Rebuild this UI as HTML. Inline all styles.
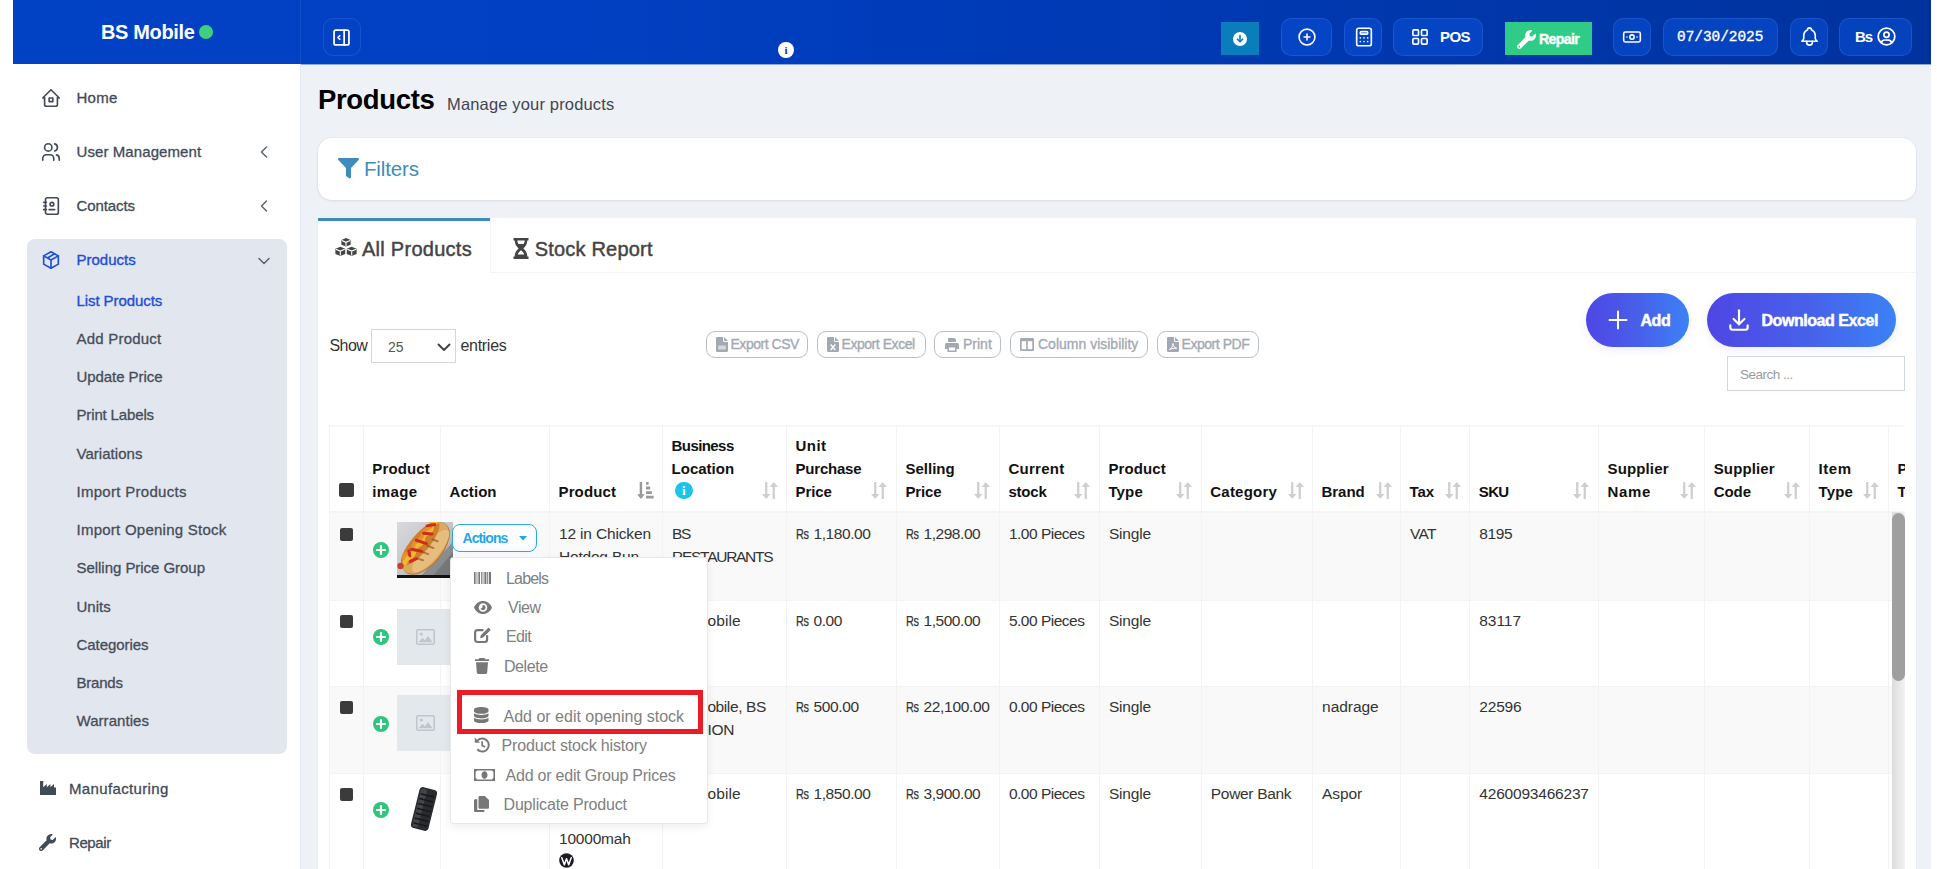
<!DOCTYPE html>
<html lang="en">
<head>
<meta charset="utf-8">
<title>Products - BS Mobile</title>
<style>
*{box-sizing:border-box}
html,body{margin:0;padding:0}
body{width:1937px;height:869px;overflow:hidden;position:relative;background:#fff;font-family:"Liberation Sans",sans-serif;color:#333}
.abs{position:absolute}
svg{display:block}
#app{position:absolute;left:13px;top:0;width:1918px;height:869px;background:#eef1f6}
/* ---------- header ---------- */
#hdr{position:absolute;left:13px;top:0;width:1918px;height:64px;background:linear-gradient(90deg,#0141c4 0%,#0140c2 30%,#0039b3 60%,#00339e 100%)}
#hdr::after{content:"";position:absolute;left:0;top:64px;width:100%;height:1px;background:inherit;opacity:.4}
#hdr .sep{position:absolute;left:287px;top:0;width:1px;height:64px;background:rgba(255,255,255,.07)}
.brand{position:absolute;left:101px;top:19.700px;font-size:20px;font-weight:700;color:#fff;line-height:24px;white-space:nowrap;letter-spacing:-.35px}
.dot{position:absolute;left:199px;top:25px;width:14px;height:14px;border-radius:50%;background:#3fcf80}
.hb{position:absolute;top:17.500px;height:38px;border-radius:10px;background:rgba(10,80,215,.55);border:1px solid rgba(120,160,255,.18);color:#fff}
.hb svg{position:absolute}
/* ---------- sidebar ---------- */
#side{position:absolute;left:13px;top:64px;width:288px;height:805px;background:#fff;border-right:1px solid #e6e9ef}
.mi{position:absolute;left:76.500px;font-size:15px;line-height:20px;color:#414a57;white-space:nowrap;-webkit-text-stroke:.3px #414a57}
.mi.sub{color:#454d59;-webkit-text-stroke:.3px #454d59}
.mi.act{color:#1d4ed8;-webkit-text-stroke:.35px #1d4ed8}
.ico{position:absolute}
#pbox{position:absolute;left:27px;top:239px;width:260px;height:515px;border-radius:8px;background:#e2e6ee}

/* ---------- main ---------- */
h1.title{position:absolute;left:318px;top:83.300px;margin:0;font-size:27.500px;line-height:34px;font-weight:700;color:#000;white-space:nowrap;letter-spacing:-.35px}
.subt{position:absolute;left:447px;top:93px;font-size:16.500px;line-height:22px;color:#3f4650;white-space:nowrap;letter-spacing:.16px}
.card{position:absolute;background:#fff}
#fcard{left:318px;top:138px;width:1598px;height:62px;border-radius:14px;box-shadow:0 1px 3px rgba(30,50,90,.08),0 0 0 1px rgba(30,50,90,.03)}
#tcard{left:318px;top:218px;width:1598px;height:660px;border-radius:3px 3px 0 0;box-shadow:0 1px 2px rgba(30,50,90,.06)}
.tab{position:absolute;top:0;height:55px;font-size:20px;line-height:28px;color:#444;white-space:nowrap;-webkit-text-stroke:.45px #444}
.ebtn{position:absolute;top:331px;height:27px;border:1.500px solid #b9bec7;border-radius:9px;color:#a3a9b3;font-size:14px;line-height:24px;white-space:nowrap;-webkit-text-stroke:.35px #a3a9b3;background:#fff}
.ebtn svg{position:absolute;top:5px}
.ebtn span{position:absolute;top:0}
.pill{position:absolute;top:293px;height:54px;border-radius:27px;background:linear-gradient(90deg,#4f46e5 0%,#4762ea 55%,#3b82f6 100%);color:#fff;font-weight:700;font-size:16px;box-shadow:0 3px 8px rgba(70,90,230,.10)}
.pill span{position:absolute;top:18.300px;line-height:20px;white-space:nowrap;-webkit-text-stroke:.5px #fff;letter-spacing:-.45px}

/* ---------- table ---------- */
#tbl{position:absolute;left:329px;top:425px;width:1576px;height:444px;overflow:hidden;background:#fff}
#tbl .abs{position:absolute}
.hl{position:absolute;left:0;width:1700px;height:1px;background:#f4f4f4}
.vl{position:absolute;top:0;width:1px;height:500px;background:#f3f3f3}
.th{position:absolute;font-size:15px;line-height:22.700px;font-weight:700;color:#111;white-space:nowrap}
.td{position:absolute;font-size:15.500px;line-height:23px;color:#333;white-space:nowrap}
.rs{display:inline-block;width:13.200px;transform:scaleX(.7);transform-origin:0 50%;letter-spacing:-.6px;-webkit-text-stroke:.25px #333}
.info{display:inline-block;width:17.500px;height:17.500px;border-radius:50%;background:#1fc3ea;color:#fff;font:bold 13px/17.500px "Liberation Serif",serif;text-align:center;margin-left:3.500px;position:relative;top:-4px;vertical-align:-2px;letter-spacing:0}
.srt{position:absolute;fill:#cfcfcf}
.srt.amt{fill:#999}
.cb{position:absolute;width:13px;height:13px;border-radius:2px;background:#3b3b3b}
.actb{position:absolute;width:85px;height:27.500px;border:1.500px solid #2aa9ea;border-radius:8px;background:#fff;box-shadow:inset 0 -3px 6px rgba(42,169,234,.06)}
.actb span{position:absolute;left:9.500px;top:3.500px;font-size:14px;line-height:18px;font-weight:700;color:#1ea7ec;letter-spacing:-.92px}
/* ---------- dropdown ---------- */
#dd{position:absolute;left:450px;top:557px;width:257.500px;height:266.500px;background:#fff;border:1px solid rgba(0,0,0,.09);border-radius:4px;box-shadow:0 3px 8px rgba(0,0,0,.07)}
#dd .it{position:absolute;font-size:16px;line-height:22px;color:#808080;white-space:nowrap}
#dd svg{position:absolute;fill:#777}
#hl{position:absolute;left:457px;top:690px;width:246px;height:43.500px;border:5px solid #eb1c25}
</style>
</head>
<body>
<div id="app"></div>

<!-- ================= HEADER ================= -->
<div id="hdr"><div class="sep"></div></div>
<div class="brand">BS Mobile</div><div class="dot"></div>

<div class="hb" style="left:323px;width:38px;background:rgba(10,70,200,.25)">
  <svg style="left:7px;top:8px" width="21" height="21" viewBox="0 0 24 24" fill="none" stroke="#fff" stroke-width="2" stroke-linecap="round" stroke-linejoin="round"><rect x="3.5" y="3.5" width="17" height="17" rx="2"/><path d="M15 3.5v17"/><path d="M10 10l-2 2 2 2"/></svg>
</div>
<div class="abs" style="left:778px;top:41.500px;width:16px;height:16.500px;border-radius:50%;background:#fff;color:#1a2a9a;font:bold 11px/17px 'Liberation Serif',serif;text-align:center">i</div>

<div class="abs" style="left:1221px;top:21.500px;width:38px;height:33px;background:#0a7dbd">
  <svg style="position:absolute;left:12px;top:10px" width="14" height="14" viewBox="0 0 14 14"><circle cx="7" cy="7" r="7" fill="#fff"/><path d="M7 3.6v6M4.4 7.2L7 9.8l2.6-2.6" fill="none" stroke="#0a7dbd" stroke-width="1.6" stroke-linecap="round" stroke-linejoin="round"/></svg>
</div>
<div class="hb" style="left:1281px;width:51px">
  <svg style="left:15px;top:8px" width="20" height="20" viewBox="0 0 24 24" fill="none" stroke="#fff" stroke-width="1.9" stroke-linecap="round"><circle cx="12" cy="12" r="9.5"/><path d="M12 8.5v7M8.5 12h7"/></svg>
</div>
<div class="hb" style="left:1344px;width:38px">
  <svg style="left:8px;top:7px" width="22" height="22" viewBox="0 0 24 24" fill="none" stroke="#fff" stroke-width="1.800" stroke-linecap="round" stroke-linejoin="round"><rect x="4" y="2.5" width="16" height="19" rx="2.2"/><rect x="8" y="6.2" width="8" height="2.6" rx=".8"/><path d="M8 13v.01M12 13v.01M16 13v.01M8 17v.01M12 17v.01M16 17v.01"/></svg>
</div>
<div class="hb" style="left:1393px;width:90px">
  <svg style="left:16.500px;top:9px" width="18" height="18" viewBox="0 0 24 24" fill="none" stroke="#fff" stroke-width="2.2" stroke-linejoin="round"><rect x="2.5" y="2.5" width="7.5" height="7.5" rx="1.4"/><rect x="14" y="2.5" width="7.5" height="7.5" rx="1.4"/><rect x="2.5" y="14" width="7.5" height="7.5" rx="1.4"/><rect x="14" y="14" width="7.5" height="7.5" rx="1.4"/></svg>
  <span class="abs" style="left:46px;top:8px;font-size:15px;line-height:20px;font-weight:700;letter-spacing:-.6px">POS</span>
</div>
<div class="abs" style="left:1505px;top:21.500px;width:87px;height:33px;background:#2ecc87;color:#fff">
  <svg style="position:absolute;left:12px;top:8px" width="19" height="19" viewBox="0 0 512 512"><path fill="#fff" d="M507.7 109.1c-2.2-9-13.5-12.100-20.100-5.500l-74.400 74.400-67.900-11.300-11.300-67.900 74.400-74.400c6.600-6.600 3.400-17.900-5.700-20.200C355.300-7.700 302.300 5 265.200 42.100c-39.700 39.700-50.600 97.200-34.100 147.400L18.700 402.800c-25 25-25 65.500 0 90.500s65.500 25 90.500 0l213.200-213.200c50.200 16.700 107.500 5.700 147.400-34.200 37.200-37.200 49.800-90.200 37.900-136.800zM64 472c-13.200 0-24-10.800-24-24 0-13.300 10.700-24 24-24s24 10.700 24 24c0 13.200-10.700 24-24 24z"/></svg>
  <span class="abs" style="left:34px;top:8px;font-size:14px;line-height:18px;font-weight:700;letter-spacing:-.55px;-webkit-text-stroke:.4px #fff">Repair</span>
</div>
<div class="hb" style="left:1613px;width:38px">
  <svg style="left:8px;top:8px" width="20" height="20" viewBox="0 0 24 24" fill="none" stroke="#fff" stroke-width="1.900" stroke-linecap="round" stroke-linejoin="round"><rect x="2" y="6" width="20" height="12" rx="2"/><circle cx="12" cy="12" r="2.6"/><path d="M6 12v.01M18 12v.01"/></svg>
</div>
<div class="hb" style="left:1663px;width:115px">
  <span class="abs" style="left:13px;top:9px;font-family:'Liberation Mono',monospace;font-size:14.4px;line-height:18px;letter-spacing:0;-webkit-text-stroke:.35px #fff">07/30/2025</span>
</div>
<div class="hb" style="left:1790px;width:38px">
  <svg style="left:7px;top:6px" width="23" height="23" viewBox="0 0 24 24" fill="none" stroke="#fff" stroke-width="1.700" stroke-linecap="round" stroke-linejoin="round"><path d="M10 5a2 2 0 114 0a7 7 0 014 6v3a4 4 0 002 3H4a4 4 0 002-3v-3a7 7 0 014-6"/><path d="M9 17v1a3 3 0 006 0v-1"/></svg>
</div>
<div class="hb" style="left:1839px;width:73px">
  <span class="abs" style="left:15px;top:8px;font-size:15px;line-height:20px;font-weight:700;letter-spacing:-1.200px">Bs</span>
  <svg style="left:36px;top:7px" width="21" height="21" viewBox="0 0 24 24" fill="none" stroke="#fff" stroke-width="2" stroke-linecap="round" stroke-linejoin="round"><circle cx="12" cy="12" r="9.5"/><circle cx="12" cy="10" r="3"/><path d="M6.2 18.9A4 4 0 0110 16h4a4 4 0 013.8 2.9"/></svg>
</div>

<!-- ================= SIDEBAR ================= -->
<div id="side"></div>
<div id="pbox"></div>

<svg class="ico" style="left:40px;top:87px" width="22" height="22" viewBox="0 0 24 24" fill="none" stroke="#414a57" stroke-width="1.8" stroke-linecap="round" stroke-linejoin="round"><path d="M5 12H3l9-9 9 9h-2"/><path d="M5 12v7a2 2 0 002 2h10a2 2 0 002-2v-7"/><rect x="10" y="12" width="4" height="4"/></svg>
<div class="mi" style="top:88px;letter-spacing:0.27px">Home</div>

<svg class="ico" style="left:40px;top:141px" width="22" height="22" viewBox="0 0 24 24" fill="none" stroke="#414a57" stroke-width="1.8" stroke-linecap="round" stroke-linejoin="round"><circle cx="9" cy="7" r="4"/><path d="M3 21v-2a4 4 0 014-4h4a4 4 0 014 4v2"/><path d="M16 3.13a4 4 0 010 7.75"/><path d="M21 21v-2a4 4 0 00-3-3.85"/></svg>
<div class="mi" style="top:142px;letter-spacing:0.09px">User Management</div>
<svg class="ico" style="left:260px;top:146px" width="8" height="12" viewBox="0 0 8 12" fill="none" stroke="#5b6370" stroke-width="1.5" stroke-linecap="round" stroke-linejoin="round"><path d="M6.5 1L1.5 6l5 5"/></svg>

<svg class="ico" style="left:40px;top:195px" width="22" height="22" viewBox="0 0 24 24" fill="none" stroke="#414a57" stroke-width="1.8" stroke-linecap="round" stroke-linejoin="round"><rect x="6" y="3" width="14" height="18" rx="2"/><circle cx="13" cy="10" r="2"/><path d="M10 16h6"/><path d="M4 8h3M4 12h3M4 16h3"/></svg>
<div class="mi" style="top:196px;letter-spacing:-0.1px">Contacts</div>
<svg class="ico" style="left:260px;top:200px" width="8" height="12" viewBox="0 0 8 12" fill="none" stroke="#5b6370" stroke-width="1.5" stroke-linecap="round" stroke-linejoin="round"><path d="M6.5 1L1.5 6l5 5"/></svg>

<svg class="ico" style="left:40px;top:249px" width="22" height="22" viewBox="0 0 24 24" fill="none" stroke="#1d4ed8" stroke-width="1.8" stroke-linecap="round" stroke-linejoin="round"><path d="M12 3l8 4.500v9L12 21l-8-4.500v-9L12 3"/><path d="M12 12l8-4.500M12 12v9M12 12L4 7.500M16 5.250l-8 4.500"/></svg>
<div class="mi act" style="top:250px;letter-spacing:0px">Products</div>
<svg class="ico" style="left:258px;top:257px" width="12" height="8" viewBox="0 0 12 8" fill="none" stroke="#5b6370" stroke-width="1.5" stroke-linecap="round" stroke-linejoin="round"><path d="M1 1.500l5 5 5-5"/></svg>

<div class="mi sub act" style="top:291px;letter-spacing:-0.08px">List Products</div>
<div class="mi sub" style="top:329px;letter-spacing:0.22px">Add Product</div>
<div class="mi sub" style="top:367px;letter-spacing:-0.06px">Update Price</div>
<div class="mi sub" style="top:405px;letter-spacing:-0.15px">Print Labels</div>
<div class="mi sub" style="top:444px;letter-spacing:0.04px">Variations</div>
<div class="mi sub" style="top:482px;letter-spacing:0.29px">Import Products</div>
<div class="mi sub" style="top:520px;letter-spacing:0.25px">Import Opening Stock</div>
<div class="mi sub" style="top:558px;letter-spacing:-0.04px">Selling Price Group</div>
<div class="mi sub" style="top:597px;letter-spacing:0px">Units</div>
<div class="mi sub" style="top:635px;letter-spacing:-0.06px">Categories</div>
<div class="mi sub" style="top:673px;letter-spacing:-0.21px">Brands</div>
<div class="mi sub" style="top:711px;letter-spacing:0.06px">Warranties</div>

<svg class="ico" style="left:40px;top:781px" width="16" height="14" viewBox="0 0 16 14"><path fill="#414a57" d="M0 0h3.200v6.200L6.800 3v3.200L10.400 3v3.200L14 3v3.500h2V14H0z"/></svg>
<div class="mi" style="left:69px;top:779px;letter-spacing:0.35px">Manufacturing</div>
<svg class="ico" style="left:39px;top:834px" width="17" height="17" viewBox="0 0 512 512"><path fill="#414a57" d="M507.700 109.100c-2.200-9-13.500-12.100-20.100-5.500l-74.400 74.400-67.900-11.300-11.300-67.900 74.400-74.400c6.600-6.600 3.400-17.900-5.700-20.200C355.300-7.700 302.300 5 265.200 42.100c-39.700 39.700-50.600 97.200-34.100 147.400L18.700 402.800c-25 25-25 65.500 0 90.500s65.500 25 90.500 0l213.200-213.200c50.200 16.700 107.500 5.700 147.400-34.200 37.200-37.200 49.800-90.200 37.900-136.800zM64 472c-13.200 0-24-10.800-24-24 0-13.300 10.700-24 24-24s24 10.700 24 24c0 13.200-10.700 24-24 24z"/></svg>
<div class="mi" style="left:69px;top:833px;letter-spacing:-0.41px">Repair</div>


<!-- ================= MAIN ================= -->
<h1 class="title">Products</h1>
<div class="subt">Manage your products</div>

<div class="card" id="fcard">
  <svg class="abs" style="left:20px;top:20px" width="21" height="21" viewBox="0 0 21 21"><path fill="#3c8dbc" d="M1.200 0h18.600c1 0 1.550 1.200.85 1.950L13 10v9.300c0 .95-1.050 1.500-1.850.95l-2.500-1.800A1.200 1.200 0 018 17.300V10L.350 1.950C-.350 1.200.200 0 1.200 0z"/></svg>
  <div class="abs" style="left:46px;top:18px;font-size:20.500px;line-height:26px;color:#3c8dbc;white-space:nowrap;letter-spacing:-.15px">Filters</div>
</div>

<div class="card" id="tcard">
  <div class="abs" style="left:172px;top:54px;width:1426px;height:1px;background:#f4f4f4"></div>
  <div class="abs" style="left:0;top:0;width:172px;height:3px;background:#3c8dbc"></div>
  <div class="abs" style="left:172px;top:0;width:1px;height:55px;background:#f4f4f4"></div>
  <div class="tab" style="left:0;width:172px">
    <svg class="abs" style="left:17px;top:20px" width="22" height="20" viewBox="0 0 22 20"><g fill="#444"><path d="M11 0l4.600 1.900v4.800L11 8.600 6.400 6.700V1.900z"/><path d="M5.300 8.700l4.900 2v5.200l-4.900 2.100-4.900-2.100v-5.200z"/><path d="M16.700 8.700l4.900 2v5.200l-4.900 2.100-4.900-2.100v-5.200z"/></g><g fill="none" stroke="#fff" stroke-width="1.100"><path d="M6.900 2.600L11 4.300l4.100-1.700M11 4.300v3.800"/><path d="M.9 11.300l4.400 1.800 4.400-1.800M5.300 13.100v4.400"/><path d="M12.300 11.300l4.400 1.800 4.400-1.800M16.700 13.100v4.400"/></g></svg>
    <span class="abs" style="left:44px;top:17px;letter-spacing:.27px">All Products</span>
  </div>
  <div class="tab" style="left:173px;width:190px">
    <svg class="abs" style="left:22px;top:20px" width="16" height="21" viewBox="0 0 16 21"><path fill="#444" d="M.500 0h15v2.600h-1.200c0 3.300-1.600 5.900-3.900 7.900 2.300 2 3.900 4.600 3.900 7.900h1.200V21H.500v-2.600h1.200c0-3.300 1.600-5.900 3.900-7.900C3.300 8.500 1.700 5.900 1.700 2.600H.500z"/><path fill="#fff" d="M4.300 2.600h7.400c0 1.300-.5 2.500-1.200 3.500H5.500c-.7-1-1.200-2.200-1.200-3.500zM8 12.300c1.500 1.200 2.700 2.600 3.300 4.300H4.700c.6-1.700 1.800-3.100 3.300-4.300z"/></svg>
    <span class="abs" style="left:43.700px;top:17px;letter-spacing:.2px">Stock Report</span>
  </div>
</div>

<div class="abs" style="left:329.500px;top:334.500px;font-size:16px;line-height:22px;color:#333;letter-spacing:-.55px">Show</div>
<div class="abs" style="left:371px;top:329px;width:85px;height:34px;border:1px solid #d2d6de;background:#fff">
  <span class="abs" style="left:16px;top:8px;font-size:14px;line-height:18px;color:#555">25</span>
  <svg class="abs" style="left:65px;top:13px" width="14" height="9" viewBox="0 0 14 9" fill="none" stroke="#444" stroke-width="2" stroke-linecap="round" stroke-linejoin="round"><path d="M1.500 1.500L7 7l5.500-5.500"/></svg>
</div>
<div class="abs" style="left:460.500px;top:334.500px;font-size:16px;line-height:22px;color:#333;letter-spacing:-.3px">entries</div>

<div class="ebtn" style="left:706px;width:102px">
  <svg style="left:9px" width="12" height="15" viewBox="0 0 12 15"><path fill="#a3a9b3" d="M0 1.200C0 .500.500 0 1.200 0H7v3.800c0 .700.500 1.200 1.200 1.200H12v8.800c0 .700-.500 1.200-1.200 1.200H1.200C.500 15 0 14.500 0 13.800zM8 0l4 4H8.400A.400.400 0 018 3.600z"/><path fill="#fff" d="M2.200 8.500h7.600v4H2.200z" opacity=".55"/></svg>
  <span style="left:23.500px;letter-spacing:-.47px">Export CSV</span>
</div>
<div class="ebtn" style="left:817px;width:109px">
  <svg style="left:9px" width="12" height="15" viewBox="0 0 12 15"><path fill="#a3a9b3" d="M0 1.200C0 .500.500 0 1.200 0H7v3.800c0 .700.500 1.200 1.200 1.200H12v8.800c0 .700-.500 1.200-1.200 1.200H1.200C.500 15 0 14.500 0 13.800zM8 0l4 4H8.400A.400.400 0 018 3.600z"/><path d="M3.700 7.500l4.600 5.500M8.300 7.500L3.700 13" stroke="#fff" stroke-width="1.300" fill="none"/></svg>
  <span style="left:23.500px;letter-spacing:-.45px">Export Excel</span>
</div>
<div class="ebtn" style="left:934px;width:67px">
  <svg style="left:10px;top:6px" width="14" height="14" viewBox="0 0 14 14"><path fill="#a3a9b3" d="M3 0h6.500L11 1.500V4H3zM1.500 5h11c.800 0 1.500.700 1.500 1.500V11h-2.500v3h-9v-3H0V6.500C0 5.700.700 5 1.500 5z"/><path fill="#fff" d="M4 9.500h6v3H4z"/></svg>
  <span style="left:28px">Print</span>
</div>
<div class="ebtn" style="left:1010px;width:138px">
  <svg style="left:9px;top:6px" width="14" height="13" viewBox="0 0 14 13"><path fill="#a3a9b3" d="M1.300 0h11.400c.700 0 1.300.600 1.300 1.300v10.400c0 .700-.600 1.300-1.300 1.300H1.300C.600 13 0 12.400 0 11.700V1.300C0 .600.600 0 1.300 0z"/><path fill="#fff" d="M1.700 3.300h4.500v8H1.700zM7.800 3.300h4.500v8H7.800z"/></svg>
  <span style="left:27px">Column visibility</span>
</div>
<div class="ebtn" style="left:1157px;width:102px">
  <svg style="left:9px" width="12" height="15" viewBox="0 0 12 15"><path fill="#a3a9b3" d="M0 1.200C0 .500.500 0 1.200 0H7v3.800c0 .700.500 1.200 1.200 1.200H12v8.800c0 .700-.500 1.200-1.200 1.200H1.200C.500 15 0 14.500 0 13.800zM8 0l4 4H8.400A.400.400 0 018 3.600z"/><path d="M2.500 12.500c2-1 3.500-3.500 3.500-6 0 2.500 1.500 4.500 3.800 4.800-2.500-.200-5 .300-7.300 1.200z" stroke="#fff" stroke-width="1" fill="none"/></svg>
  <span style="left:23.500px;letter-spacing:-.45px">Export PDF</span>
</div>

<div class="pill" style="left:1586px;width:103px">
  <svg class="abs" style="left:21.500px;top:17.300px" width="20" height="20" viewBox="0 0 20 20" fill="none" stroke="#fff" stroke-width="2" stroke-linecap="round"><path d="M10 1.500v17M1.500 10h17"/></svg>
  <span style="left:54.500px">Add</span>
</div>
<div class="pill" style="left:1707px;width:189px">
  <svg class="abs" style="left:18.500px;top:14.200px" width="26" height="26" viewBox="0 0 24 24" fill="none" stroke="#fff" stroke-width="2" stroke-linecap="round" stroke-linejoin="round"><path d="M4 17v2a2 2 0 002 2h12a2 2 0 002-2v-2"/><path d="M7 11l5 5 5-5"/><path d="M12 3v13"/></svg>
  <span style="left:54.500px">Download Excel</span>
</div>
<div class="abs" style="left:1727px;top:356px;width:178px;height:35px;border:1px solid #d2d6de;background:#fff">
  <span class="abs" style="left:12px;top:9px;font-size:13.500px;line-height:18px;color:#9a9a9a;letter-spacing:-.5px">Search ...</span>
</div>

<!-- ================= TABLE ================= -->
<!--TBL_START-->
<div id="tbl">
<div class="abs" style="left:0;top:88px;width:1700px;height:87px;background:#f9f9f9"></div>
<div class="abs" style="left:0;top:260.5px;width:1700px;height:87.5px;background:#f9f9f9"></div>
<div class="hl" style="top:0;height:2px;background:#f8f8f8"></div>
<div class="hl" style="top:86px;height:2px"></div>
<div class="hl" style="top:175px"></div>
<div class="hl" style="top:260.5px"></div>
<div class="hl" style="top:348px"></div>
<div class="vl" style="left:0px"></div>
<div class="vl" style="left:34px"></div>
<div class="vl" style="left:111px"></div>
<div class="vl" style="left:220px"></div>
<div class="vl" style="left:333px"></div>
<div class="vl" style="left:457px"></div>
<div class="vl" style="left:567px"></div>
<div class="vl" style="left:670px"></div>
<div class="vl" style="left:770px"></div>
<div class="vl" style="left:872px"></div>
<div class="vl" style="left:983px"></div>
<div class="vl" style="left:1071px"></div>
<div class="vl" style="left:1140px"></div>
<div class="vl" style="left:1269px"></div>
<div class="vl" style="left:1375px"></div>
<div class="vl" style="left:1480px"></div>
<div class="vl" style="left:1559px"></div>
<div class="th" style="left:43.3px;top:32.95px"><span style="letter-spacing:0.13px">Product</span><br><span style="letter-spacing:0.37px">image</span></div>
<div class="th" style="left:120.6px;top:55.65px"><span style="letter-spacing:0.05px">Action</span></div>
<div class="th" style="left:229.5px;top:55.65px"><span style="letter-spacing:0.13px">Product</span></div>
<svg class="srt amt" style="left:308.2px;top:57.3px" width="17" height="17" viewBox="0 0 17 17"><path d="M2.700 0h2.400v12.300h2.600L3.900 17 .100 12.300h2.600zM9 0h2.600v2.800H9zM9 4.600h4.200v2.800H9zM9 9.200h5.900V12H9zM9 13.800h7.600v2.800H9z"/></svg>
<div class="th" style="left:342.6px;top:10.25px"><span style="letter-spacing:-0.58px">Business</span><br><span style="letter-spacing:0px">Location</span><br><span class="info">i</span></div>
<svg class="srt" style="left:432.5px;top:57.3px" width="16" height="17" viewBox="0 0 16 17"><path d="M3.100 0h2.300v12h3L4.250 17 0 12h3.100zM10.600 17h2.300V5h3.100L11.750 0 7.500 5h3.100z"/></svg>
<div class="th" style="left:466.6px;top:10.25px"><span style="letter-spacing:0.43px">Unit</span><br><span style="letter-spacing:-0.23px">Purchase</span><br><span style="letter-spacing:-0.14px">Price</span></div>
<svg class="srt" style="left:542.4px;top:57.3px" width="16" height="17" viewBox="0 0 16 17"><path d="M3.100 0h2.300v12h3L4.250 17 0 12h3.100zM10.600 17h2.300V5h3.100L11.750 0 7.500 5h3.100z"/></svg>
<div class="th" style="left:576.5px;top:32.95px"><span style="letter-spacing:0px">Selling</span><br><span style="letter-spacing:-0.14px">Price</span></div>
<svg class="srt" style="left:645.3px;top:57.3px" width="16" height="17" viewBox="0 0 16 17"><path d="M3.100 0h2.300v12h3L4.250 17 0 12h3.100zM10.600 17h2.300V5h3.100L11.750 0 7.500 5h3.100z"/></svg>
<div class="th" style="left:679.4px;top:32.95px"><span style="letter-spacing:0.29px">Current</span><br><span style="letter-spacing:-0.18px">stock</span></div>
<svg class="srt" style="left:745.3px;top:57.3px" width="16" height="17" viewBox="0 0 16 17"><path d="M3.100 0h2.300v12h3L4.250 17 0 12h3.100zM10.600 17h2.300V5h3.100L11.750 0 7.500 5h3.100z"/></svg>
<div class="th" style="left:779.4px;top:32.95px"><span style="letter-spacing:0.13px">Product</span><br><span style="letter-spacing:0.15px">Type</span></div>
<svg class="srt" style="left:847.2px;top:57.3px" width="16" height="17" viewBox="0 0 16 17"><path d="M3.100 0h2.300v12h3L4.250 17 0 12h3.100zM10.600 17h2.300V5h3.100L11.750 0 7.500 5h3.100z"/></svg>
<div class="th" style="left:881.3px;top:55.65px"><span style="letter-spacing:0.21px">Category</span></div>
<svg class="srt" style="left:958.5px;top:57.3px" width="16" height="17" viewBox="0 0 16 17"><path d="M3.100 0h2.300v12h3L4.250 17 0 12h3.100zM10.600 17h2.300V5h3.100L11.750 0 7.500 5h3.100z"/></svg>
<div class="th" style="left:992.6px;top:55.65px"><span style="letter-spacing:-0.07px">Brand</span></div>
<svg class="srt" style="left:1046.5px;top:57.3px" width="16" height="17" viewBox="0 0 16 17"><path d="M3.100 0h2.300v12h3L4.250 17 0 12h3.100zM10.600 17h2.300V5h3.100L11.750 0 7.500 5h3.100z"/></svg>
<div class="th" style="left:1080.6px;top:55.65px"><span style="letter-spacing:-0.11px">Tax</span></div>
<svg class="srt" style="left:1115.7px;top:57.3px" width="16" height="17" viewBox="0 0 16 17"><path d="M3.100 0h2.300v12h3L4.250 17 0 12h3.100zM10.600 17h2.300V5h3.100L11.750 0 7.500 5h3.100z"/></svg>
<div class="th" style="left:1149.8px;top:55.65px"><span style="letter-spacing:-0.66px">SKU</span></div>
<svg class="srt" style="left:1244.4px;top:57.3px" width="16" height="17" viewBox="0 0 16 17"><path d="M3.100 0h2.300v12h3L4.250 17 0 12h3.100zM10.600 17h2.300V5h3.100L11.750 0 7.500 5h3.100z"/></svg>
<div class="th" style="left:1278.5px;top:32.95px"><span style="letter-spacing:0.14px">Supplier</span><br><span style="letter-spacing:0.64px">Name</span></div>
<svg class="srt" style="left:1350.6px;top:57.3px" width="16" height="17" viewBox="0 0 16 17"><path d="M3.100 0h2.300v12h3L4.250 17 0 12h3.100zM10.600 17h2.300V5h3.100L11.750 0 7.500 5h3.100z"/></svg>
<div class="th" style="left:1384.7px;top:32.95px"><span style="letter-spacing:0.14px">Supplier</span><br><span style="letter-spacing:-0.07px">Code</span></div>
<svg class="srt" style="left:1455.4px;top:57.3px" width="16" height="17" viewBox="0 0 16 17"><path d="M3.100 0h2.300v12h3L4.250 17 0 12h3.100zM10.600 17h2.300V5h3.100L11.750 0 7.500 5h3.100z"/></svg>
<div class="th" style="left:1489.5px;top:32.95px"><span style="letter-spacing:0.59px">Item</span><br><span style="letter-spacing:0.15px">Type</span></div>
<svg class="srt" style="left:1534.4px;top:57.3px" width="16" height="17" viewBox="0 0 16 17"><path d="M3.100 0h2.300v12h3L4.250 17 0 12h3.100zM10.600 17h2.300V5h3.100L11.750 0 7.500 5h3.100z"/></svg>
<div class="th" style="left:1568.5px;top:32.95px"><span style="letter-spacing:0.13px">Product</span><br><span style="letter-spacing:0px">Tags</span></div>
<div class="cb" style="left:10.2px;top:57.5px;width:14.500px;height:14.500px"></div>
<div class="cb" style="left:10.8px;top:103px"></div>
<svg class="abs" style="left:43.8px;top:116.5px" width="16" height="16" viewBox="0 0 16 16"><circle cx="8" cy="8" r="8" fill="#2fc57d"/><path d="M8 4v8M4 8h8" stroke="#fff" stroke-width="2.200" stroke-linecap="round"/></svg>
<svg class="abs" style="left:68.2px;top:96.8px" width="56" height="56" viewBox="0 0 56 56"><defs><linearGradient id="hg" x1="0" y1="0" x2="1" y2="1"><stop offset="0" stop-color="#d9dadd"/><stop offset=".5" stop-color="#c4c5c9"/><stop offset="1" stop-color="#9a9b9e"/></linearGradient><clipPath id="hc"><rect width="56" height="56"/></clipPath></defs><g clip-path="url(#hc)"><rect width="56" height="56" fill="url(#hg)"/><path d="M30 56L56 26v30z" fill="#77787b"/><path d="M22 56l34-36v10L34 56z" fill="#8b8c8f"/><g transform="rotate(-50 28.500 26) translate(-.500 -2)"><ellipse cx="29" cy="28.800" rx="31.500" ry="16.200" fill="#b47a33"/><ellipse cx="29" cy="28" rx="31" ry="15.800" fill="#dba960"/><ellipse cx="30" cy="34" rx="27" ry="8.500" fill="#e6bd7c"/><ellipse cx="29" cy="21" rx="28" ry="9" fill="#cf7f2c"/><path d="M4 22c6-5 9 4 15-1s9 4 15-1 9 4 15-1 5 1 6 0" stroke="#f2b634" stroke-width="5" fill="none" stroke-linecap="round"/><path d="M7 17.500c6-4 9 4 15 0s9 4 15 0 9 3 14 0" stroke="#e8912b" stroke-width="3.500" fill="none" stroke-linecap="round"/><path d="M9 25l6 3M19 18l5 9M29 16l4 10M39 17l5 7M47 15l6 5M13 21l3-4" stroke="#c9301b" stroke-width="3" fill="none" stroke-linecap="round"/><path d="M24 28l2 6M32 28l2 6M40 28l2 5M16 29l2 5" stroke="#8a4a1c" stroke-width="2" fill="none" stroke-linecap="round" opacity=".6"/></g><circle cx="3.500" cy="44" r="3.200" fill="#c9402a"/><rect y="53" width="53" height="3" fill="#121214"/></g></svg>
<div class="td" style="left:230px;top:97.32px"><span style="letter-spacing:-0.16px">12 in Chicken</span><br><span style="letter-spacing:-0.2px">Hotdog Bun</span></div>
<div class="td" style="left:343.1px;top:97.32px"><span style="letter-spacing:-1.5px">BS</span><br><span style="letter-spacing:-1.28px">RESTAURANTS</span></div>
<div class="td" style="left:467.1px;top:97.32px"><span class="rs">Rs</span> <span style="letter-spacing:-0.45px">1,180.00</span></div>
<div class="td" style="left:577px;top:97.32px"><span class="rs">Rs</span> <span style="letter-spacing:-0.45px">1,298.00</span></div>
<div class="td" style="left:679.9px;top:97.32px"><span style="letter-spacing:-0.49px">1.00 Pieces</span></div>
<div class="td" style="left:779.9px;top:97.32px"><span style="letter-spacing:-0.17px">Single</span></div>
<div class="td" style="left:1081.1px;top:97.32px"><span style="letter-spacing:-0.75px">VAT</span></div>
<div class="td" style="left:1150.3px;top:97.32px"><span style="letter-spacing:-0.37px">8195</span></div>
<div class="cb" style="left:10.8px;top:190px"></div>
<svg class="abs" style="left:43.8px;top:204px" width="16" height="16" viewBox="0 0 16 16"><circle cx="8" cy="8" r="8" fill="#2fc57d"/><path d="M8 4v8M4 8h8" stroke="#fff" stroke-width="2.200" stroke-linecap="round"/></svg>
<div class="abs" style="left:68.2px;top:184.3px;width:56px;height:56px;background:#e3e8ec"></div>
<svg class="abs" style="left:87.2px;top:204.3px" width="19" height="16" viewBox="0 0 19 16"><rect x=".750" y=".750" width="17.500" height="14.500" rx="1.200" fill="none" stroke="#bfc6cb" stroke-width="1.500"/><circle cx="5.300" cy="5" r="1.600" fill="#bfc6cb"/><path d="M2.500 13.200l4-4.500 2.500 2.600 3-4.300 4.500 6.200z" fill="#bfc6cb"/></svg>
<div class="td" style="left:230px;top:184.32px"><span style="letter-spacing:-0.2px">Test Product</span></div>
<div class="td" style="left:343.1px;top:184.32px"><span style="letter-spacing:-.65px">BS M</span><span style="letter-spacing:.15px">obile</span></div>
<div class="td" style="left:467.1px;top:184.32px"><span class="rs">Rs</span> <span style="letter-spacing:-0.49px">0.00</span></div>
<div class="td" style="left:577px;top:184.32px"><span class="rs">Rs</span> <span style="letter-spacing:-0.45px">1,500.00</span></div>
<div class="td" style="left:679.9px;top:184.32px"><span style="letter-spacing:-0.49px">5.00 Pieces</span></div>
<div class="td" style="left:779.9px;top:184.32px"><span style="letter-spacing:-0.17px">Single</span></div>
<div class="td" style="left:1150.3px;top:184.32px"><span style="letter-spacing:-0.05px">83117</span></div>
<div class="cb" style="left:10.8px;top:276px"></div>
<svg class="abs" style="left:43.8px;top:290.8px" width="16" height="16" viewBox="0 0 16 16"><circle cx="8" cy="8" r="8" fill="#2fc57d"/><path d="M8 4v8M4 8h8" stroke="#fff" stroke-width="2.200" stroke-linecap="round"/></svg>
<div class="abs" style="left:68.2px;top:270.4px;width:56px;height:56px;background:#e3e8ec"></div>
<svg class="abs" style="left:87.2px;top:290.4px" width="19" height="16" viewBox="0 0 19 16"><rect x=".750" y=".750" width="17.500" height="14.500" rx="1.200" fill="none" stroke="#bfc6cb" stroke-width="1.500"/><circle cx="5.300" cy="5" r="1.600" fill="#bfc6cb"/><path d="M2.500 13.200l4-4.500 2.500 2.600 3-4.300 4.500 6.200z" fill="#bfc6cb"/></svg>
<div class="td" style="left:230px;top:270.42px"><span style="letter-spacing:-0.2px">Nadrage</span></div>
<div class="td" style="left:343.1px;top:270.42px"><span style="letter-spacing:-.65px">BS M</span><span style="letter-spacing:-.4px">obile, BS</span><br><span style="letter-spacing:-1.25px">FASH</span><span style="letter-spacing:-.3px">ION</span></div>
<div class="td" style="left:467.1px;top:270.42px"><span class="rs">Rs</span> <span style="letter-spacing:-0.37px">500.00</span></div>
<div class="td" style="left:577px;top:270.42px"><span class="rs">Rs</span> <span style="letter-spacing:-0.32px">22,100.00</span></div>
<div class="td" style="left:679.9px;top:270.42px"><span style="letter-spacing:-0.49px">0.00 Pieces</span></div>
<div class="td" style="left:779.9px;top:270.42px"><span style="letter-spacing:-0.17px">Single</span></div>
<div class="td" style="left:993.1px;top:270.42px"><span style="letter-spacing:-0.04px">nadrage</span></div>
<div class="td" style="left:1150.3px;top:270.42px"><span style="letter-spacing:-0.2px">22596</span></div>
<div class="cb" style="left:10.8px;top:363px"></div>
<svg class="abs" style="left:43.8px;top:377px" width="16" height="16" viewBox="0 0 16 16"><circle cx="8" cy="8" r="8" fill="#2fc57d"/><path d="M8 4v8M4 8h8" stroke="#fff" stroke-width="2.200" stroke-linecap="round"/></svg>
<svg class="abs" style="left:78.2px;top:361.3px" width="34" height="46" viewBox="0 0 34 46"><g transform="rotate(14 17 23)"><rect x="8" y="2" width="18" height="42" rx="3.500" fill="#2a2b2f"/><rect x="9.500" y="3.500" width="6" height="39" rx="2" fill="#45464b"/><path d="M10 9h14M10 14h14M10 19h14M10 24h14M10 29h14M10 34h14M10 39h14" stroke="#18191c" stroke-width="1.600"/></g></svg>
<div class="td" style="left:230px;top:357.32px;line-height:22.600px"><span style="letter-spacing:-0.2px">Aspor A323</span><br><span style="letter-spacing:-0.31px">Power Bank</span><br><span style="letter-spacing:-0.2px">10000mah</span></div>
<div class="td" style="left:343.1px;top:357.32px"><span style="letter-spacing:-.65px">BS M</span><span style="letter-spacing:.15px">obile</span></div>
<div class="td" style="left:467.1px;top:357.32px"><span class="rs">Rs</span> <span style="letter-spacing:-0.45px">1,850.00</span></div>
<div class="td" style="left:577px;top:357.32px"><span class="rs">Rs</span> <span style="letter-spacing:-0.45px">3,900.00</span></div>
<div class="td" style="left:679.9px;top:357.32px"><span style="letter-spacing:-0.49px">0.00 Pieces</span></div>
<div class="td" style="left:779.9px;top:357.32px"><span style="letter-spacing:-0.17px">Single</span></div>
<div class="td" style="left:881.8px;top:357.32px"><span style="letter-spacing:-0.31px">Power Bank</span></div>
<div class="td" style="left:993.1px;top:357.32px"><span style="letter-spacing:-0.1px">Aspor</span></div>
<div class="td" style="left:1150.3px;top:357.32px"><span style="letter-spacing:-0.2px">4260093466237</span></div>
<svg class="abs" style="left:230px;top:428px" width="15" height="15" viewBox="0 0 15 15"><circle cx="7.500" cy="7.500" r="7.300" fill="#1c1c26"/><path d="M2.800 4.800l2.500 7 2.200-6 2.200 6 2.500-7" stroke="#fff" stroke-width="1.500" fill="none" stroke-linecap="round" stroke-linejoin="round"/></svg>
<div class="actb" style="left:123px;top:99.2px"><span>Actions</span><svg class="abs" style="left:65.500px;top:11px" width="8" height="4.500" viewBox="0 0 8 4.500"><path d="M0 0h8L4 4.500z" fill="#1ea7ec"/></svg></div>
<div class="actb" style="left:123px;top:185.6px"><span>Actions</span><svg class="abs" style="left:65.500px;top:11px" width="8" height="4.500" viewBox="0 0 8 4.500"><path d="M0 0h8L4 4.500z" fill="#1ea7ec"/></svg></div>
<div class="actb" style="left:123px;top:271.1px"><span>Actions</span><svg class="abs" style="left:65.500px;top:11px" width="8" height="4.500" viewBox="0 0 8 4.500"><path d="M0 0h8L4 4.500z" fill="#1ea7ec"/></svg></div>
<div class="actb" style="left:123px;top:358.6px"><span>Actions</span><svg class="abs" style="left:65.500px;top:11px" width="8" height="4.500" viewBox="0 0 8 4.500"><path d="M0 0h8L4 4.500z" fill="#1ea7ec"/></svg></div>
<div class="abs" style="left:1563px;top:87px;width:13px;height:400px;background:linear-gradient(90deg,#dcdcdc,#f3f3f3)"></div>
<div class="abs" style="left:1563px;top:88.2px;width:13px;height:167.500px;border-radius:6.500px;background:#9f9f9f"></div>
</div>
<!--TBL_END-->

<!-- ================= ACTIONS DROPDOWN ================= -->
<div id="dd">
  <svg style="left:22.500px;top:14px" width="17" height="12" viewBox="0 0 17 12"><path d="M0 0h1.600v12H0zM2.600 0h.800v12h-.800zM4.400 0h1.600v12H4.400zM7 0h.800v12H7zM8.600 0h.800v12h-.800zM10.400 0h2v12h-2zM13.200 0h.800v12h-.800zM14.800 0H17v12h-2.200z"/></svg>
  <div class="it" style="left:55px;top:9.500px;letter-spacing:-.81px">Labels</div>
  <svg style="left:23px;top:42.500px" width="18" height="13" viewBox="0 0 18 13"><path d="M9 0c4 0 7.300 2.500 9 6.500-1.700 4-5 6.500-9 6.500S1.700 10.500 0 6.500C1.700 2.500 5 0 9 0zm0 2.200a4.300 4.300 0 100 8.600 4.300 4.300 0 000-8.600zm0 1.700a2.600 2.600 0 11-2.500 3.300 1.400 1.400 0 001.800-1.800c.200-1 .400-1.500.700-1.500z"/></svg>
  <div class="it" style="left:57px;top:38.500px;letter-spacing:-.47px">View</div>
  <svg style="left:23px;top:69px" width="17" height="16" viewBox="0 0 17 16"><path d="M3.300 2h6.200v2.200H3.600c-.800 0-1.400.600-1.400 1.400v7c0 .800.600 1.400 1.400 1.400h7c.800 0 1.400-.600 1.400-1.400V8.300h2.200v4.600c0 1.700-1.400 3.100-3.100 3.100H3.300C1.500 16 0 14.600 0 12.800V5.200C0 3.400 1.500 2 3.300 2zM14.300.300l1.900 1.900c.400.400.400 1 0 1.400l-7 7-3.100.700.700-3.100 7-7c.400-.400 1-.400 1.400 0z" fill-rule="evenodd"/></svg>
  <div class="it" style="left:55px;top:67.800px;letter-spacing:-.64px">Edit</div>
  <svg style="left:23.500px;top:100px" width="14" height="16" viewBox="0 0 14 16"><path d="M4.500 0h5l.800 1.200H14v1.900H0V1.200h3.700zM1 4.300h12l-.800 10.300c-.100.800-.700 1.400-1.500 1.400H3.300c-.800 0-1.400-.600-1.500-1.400z"/></svg>
  <div class="it" style="left:53px;top:97.900px;letter-spacing:-.44px">Delete</div>

  <svg style="left:23px;top:149.300px" width="14.500" height="16" viewBox="0 0 15 16" preserveAspectRatio="none"><path d="M7.500 0C11.600 0 15 1.100 15 2.600v1.600c0 1.500-3.400 2.600-7.500 2.600S0 5.700 0 4.200V2.600C0 1.100 3.400 0 7.500 0zM0 6.200c1.500 1.100 4.500 1.700 7.500 1.700s6-.600 7.500-1.700v2.600c0 1.500-3.400 2.600-7.500 2.600S0 10.300 0 8.800zM0 10.800c1.500 1.100 4.500 1.700 7.500 1.700s6-.600 7.500-1.700v2.600c0 1.500-3.400 2.600-7.500 2.600S0 14.900 0 13.400z"/></svg>
  <div class="it" style="left:52.500px;top:147.700px">Add or edit opening stock</div>
  <svg style="left:23px;top:179px" width="16" height="16" viewBox="0 0 16 16"><path d="M8.200.500a7.500 7.500 0 11-5.600 12.500l1.500-1.400A5.500 5.500 0 108.200 2.500c-1.500 0-2.900.600-3.900 1.600L6 5.800H.800V.600l2.100 2.100A7.500 7.500 0 018.200.500zM7.300 4.300h1.700v3.600l2.400 1.400-.900 1.500-3.200-1.900z"/></svg>
  <div class="it" style="left:50.500px;top:176.600px;letter-spacing:-.15px">Product stock history</div>
  <svg style="left:23px;top:211px" width="21" height="12" viewBox="0 0 21 12"><path d="M0 0h21v12H0zM2.800 1.600c0 .700-.500 1.200-1.200 1.200v6.400c.700 0 1.200.500 1.200 1.200h15.400c0-.700.500-1.200 1.200-1.200V2.800c-.700 0-1.200-.500-1.200-1.200zM10.500 2.200c1.700 0 3 1.700 3 3.800s-1.300 3.800-3 3.800-3-1.700-3-3.800 1.300-3.800 3-3.800z" fill-rule="evenodd"/><path d="M10 3.800h1v4.400h-1z"/></svg>
  <div class="it" style="left:54.500px;top:206.600px;letter-spacing:-.22px">Add or edit Group Prices</div>
  <svg style="left:23px;top:238px" width="15" height="16" viewBox="0 0 15 16"><path d="M5.800 0h5l4.200 4v7.500c0 .700-.600 1.300-1.300 1.300H5.800c-.700 0-1.300-.600-1.300-1.300V1.300C4.500.600 5.100 0 5.800 0zM0 4.500c0-.700.600-1.300 1.300-1.300h2V14h7.200v.700c0 .700-.600 1.300-1.300 1.300H1.300C.600 16 0 15.400 0 14.700z"/></svg>
  <div class="it" style="left:52.500px;top:235.500px;letter-spacing:-.17px">Duplicate Product</div>
</div>
<div id="hl"></div>


</body>
</html>
